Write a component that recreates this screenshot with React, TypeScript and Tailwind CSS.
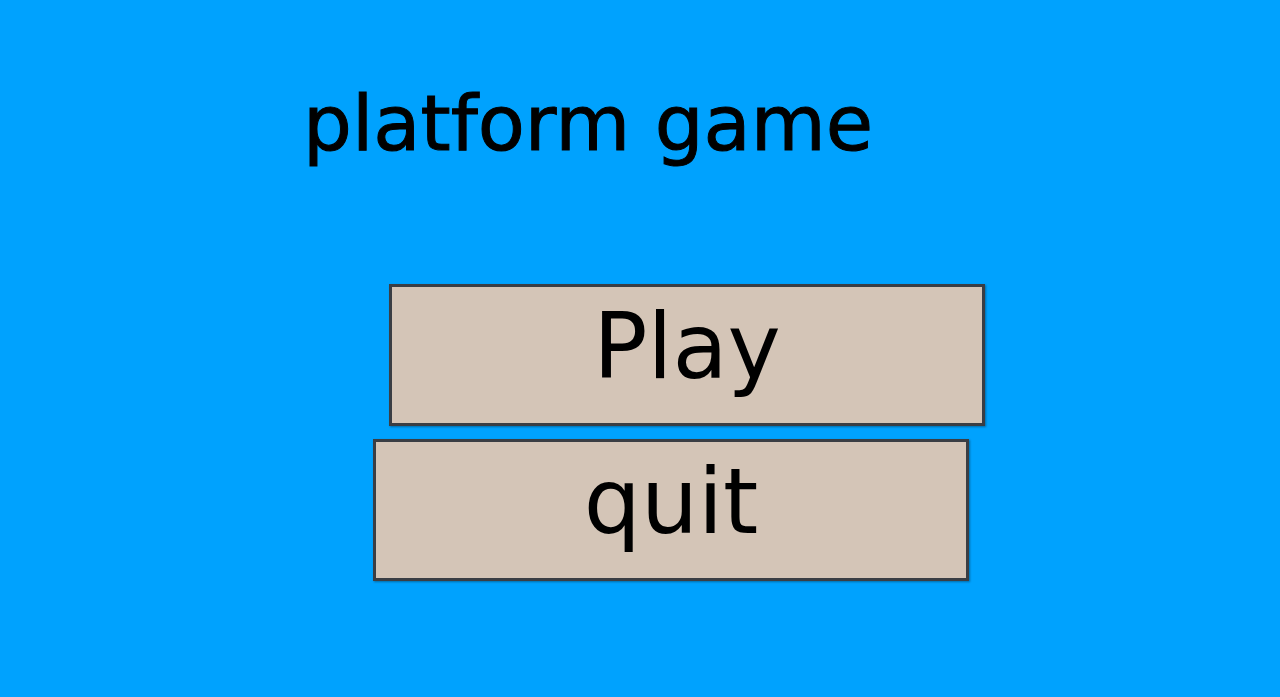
import React from 'react';

const font = { fontFamily: '"Comic Sans MS", "DejaVu Sans", sans-serif' };

const MenuButton: React.FC<{ label: string; className: string }> = ({ label, className }) => (
  <button
    className={`flex items-center justify-center w-[596px] h-[142px] bg-[#d4c5b7] border-[3px] border-[#3a3e44] shadow-[1px_1px_2px_rgba(0,0,0,0.35)] text-black text-[90px] leading-none ${className}`}
    style={font}
  >
    <span className="-mt-[16px]">{label}</span>
  </button>
);

export default function App() {
  return (
    <div className="w-full h-[697px] bg-[#00a2fe] overflow-hidden">
      <div className="flex flex-col items-start pt-[85px]">
        <h1
          className="ml-[303px] text-[77px] leading-none text-black [-webkit-text-stroke:1px_black]"
          style={font}
        >
          platform game
        </h1>
        <MenuButton label="Play" className="ml-[389px] mt-[122px]" />
        <MenuButton label="quit" className="ml-[373px] mt-[13px]" />
      </div>
    </div>
  );
}
